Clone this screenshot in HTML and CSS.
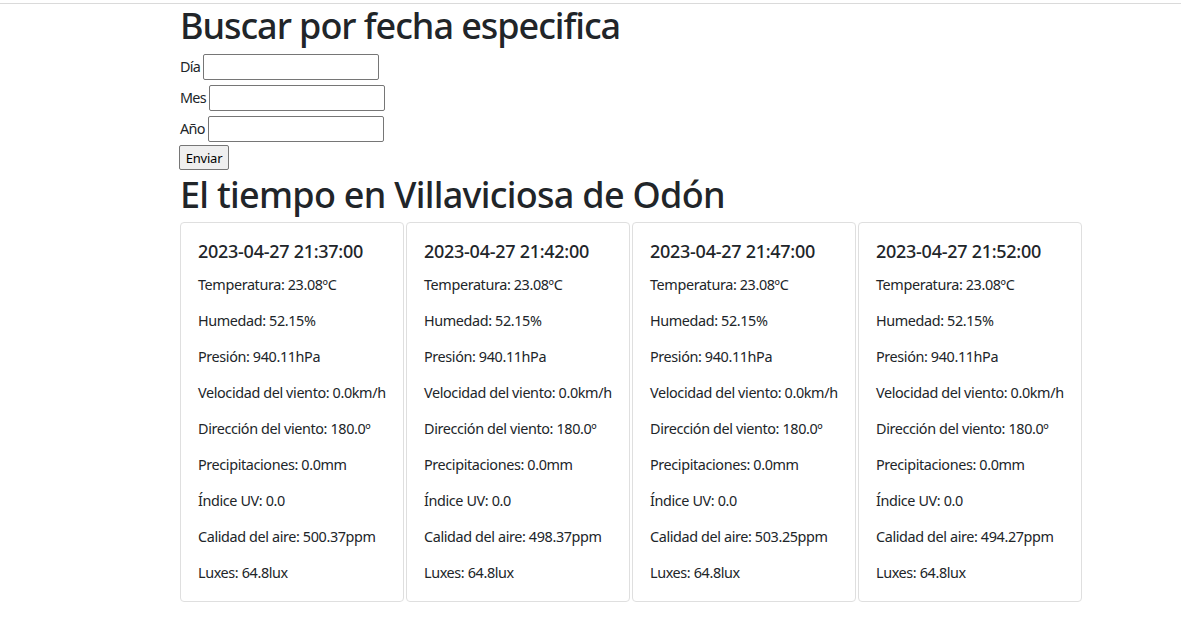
FILE: index.html
```html
<!DOCTYPE html>
<html lang="es">
<head>
<meta charset="utf-8">
<title>El tiempo</title>
<link rel="stylesheet" href="styles.css">
</head>
<body>
<div class="topbar"></div>
<main class="container">
  <h1 class="title">Buscar por fecha especifica</h1>
  <form class="search">
    <div class="row"><label for="dia">Día</label><input id="dia" class="w-dia" type="text"></div>
    <div class="row"><label for="mes">Mes</label><input id="mes" type="text"></div>
    <div class="row"><label for="anio">Año</label><input id="anio" type="text"></div>
    <button type="button" class="btn">Enviar</button>
  </form>
  <h1 class="title title-2">El tiempo en Villaviciosa de Odón</h1>
  <div class="cards">
    <div class="card">
      <h5 class="card-title">2023-04-27 21:37:00</h5>
      <p>Temperatura: 23.08ºC</p>
      <p>Humedad: 52.15%</p>
      <p>Presión: 940.11hPa</p>
      <p>Velocidad del viento: 0.0km/h</p>
      <p>Dirección del viento: 180.0º</p>
      <p>Precipitaciones: 0.0mm</p>
      <p>Índice UV: 0.0</p>
      <p>Calidad del aire: 500.37ppm</p>
      <p>Luxes: 64.8lux</p>
    </div>
    <div class="card">
      <h5 class="card-title">2023-04-27 21:42:00</h5>
      <p>Temperatura: 23.08ºC</p>
      <p>Humedad: 52.15%</p>
      <p>Presión: 940.11hPa</p>
      <p>Velocidad del viento: 0.0km/h</p>
      <p>Dirección del viento: 180.0º</p>
      <p>Precipitaciones: 0.0mm</p>
      <p>Índice UV: 0.0</p>
      <p>Calidad del aire: 498.37ppm</p>
      <p>Luxes: 64.8lux</p>
    </div>
    <div class="card">
      <h5 class="card-title">2023-04-27 21:47:00</h5>
      <p>Temperatura: 23.08ºC</p>
      <p>Humedad: 52.15%</p>
      <p>Presión: 940.11hPa</p>
      <p>Velocidad del viento: 0.0km/h</p>
      <p>Dirección del viento: 180.0º</p>
      <p>Precipitaciones: 0.0mm</p>
      <p>Índice UV: 0.0</p>
      <p>Calidad del aire: 503.25ppm</p>
      <p>Luxes: 64.8lux</p>
    </div>
    <div class="card">
      <h5 class="card-title">2023-04-27 21:52:00</h5>
      <p>Temperatura: 23.08ºC</p>
      <p>Humedad: 52.15%</p>
      <p>Presión: 940.11hPa</p>
      <p>Velocidad del viento: 0.0km/h</p>
      <p>Dirección del viento: 180.0º</p>
      <p>Precipitaciones: 0.0mm</p>
      <p>Índice UV: 0.0</p>
      <p>Calidad del aire: 494.27ppm</p>
      <p>Luxes: 64.8lux</p>
    </div>
  </div>
</main>
</body>
</html>
```
FILE: styles.css
```css
* { box-sizing: border-box; }
html, body { margin: 0; padding: 0; background: #fff; }
body {
  font-family: "Noto Sans", "Open Sans", sans-serif;
  font-size: 14.4px;
  line-height: 1.5;
  color: #212529;
  letter-spacing: -0.38px;
}
.topbar {
  height: 4px;
  border-bottom: 1px solid #dadada;
}
.container {
  margin-left: 180px;
  width: 902px;
}
.title {
  margin: 0;
  font-size: 36px;
  font-weight: 500;
  line-height: 43px;
  letter-spacing: -1.05px;
}
.search { display: flex; flex-direction: column; align-items: flex-start; gap: 5px; margin-top: 7px; }
.row { display: flex; align-items: center; gap: 3px; height: 26px; }
.row label { line-height: 26px; letter-spacing: -0.7px; }
.row input {
  width: 176px;
  height: 26px;
  border: 1px solid #767676;
  border-radius: 2px;
  padding: 1px 2px;
  font: inherit;
}
.btn {
  height: 25px;
  width: 50px;
  margin-top: -2px;
  margin-left: -1px;
  padding: 0;
  background: #efefef;
  border: 1px solid #767676;
  border-radius: 2px;
  font-family: inherit;
  font-size: 13px;
  letter-spacing: -0.2px;
  color: #000;
}
.title-2 { margin-top: 3px; margin-bottom: 6px; letter-spacing: -0.72px; }
.cards {
  display: grid;
  grid-template-columns: repeat(4, 224px);
  gap: 2px;
}
.card {
  border: 1px solid #dfdfdf;
  border-radius: 4px;
  padding: 17px 17px 0 17px;
  height: 380px;
}
.card-title {
  margin: 0 0 12px 0;
  font-size: 18px;
  font-weight: 500;
  line-height: 22px;
  letter-spacing: -0.27px;
}
.card p {
  margin: 0 0 14.4px 0;
  line-height: 21.6px;
  white-space: nowrap;
}
```
